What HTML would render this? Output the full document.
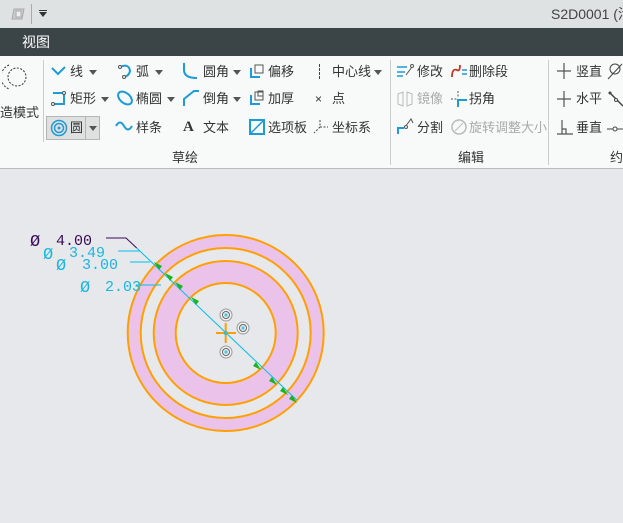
<!DOCTYPE html>
<html><head><meta charset="utf-8"><style>
*{margin:0;padding:0;box-sizing:border-box}
body{width:623px;height:523px;overflow:hidden;background:#e6e8eb;font-family:"Liberation Sans","Noto Sans CJK SC",sans-serif;position:relative}
.t{position:absolute;font-size:13px;color:#333;white-space:nowrap;line-height:16px}
.g{color:#aaa}
.ic{position:absolute}
.dd{position:absolute;width:0;height:0;border-left:4px solid transparent;border-right:4px solid transparent;border-top:5px solid #555}
</style></head><body>
<div style="position:absolute;left:0;top:0;width:623px;height:28px;background:#dee2e2"></div>
<div style="position:absolute;left:31px;top:4px;width:1px;height:20px;background:#aaa"></div>
<svg class="ic" style="left:10px;top:7px" width="16" height="14"><path d="M2 12 L4 2 L14 2 L12 12 Z" fill="#ccc" stroke="#aaa"/><rect x="6" y="4" width="5" height="6" fill="#eee" stroke="#aaa"/></svg>
<div class="dd" style="left:39px;top:12px;border-top-color:#333"></div><div style="position:absolute;left:39px;top:10px;width:8px;height:1px;background:#333"></div>
<div class="t" style="left:551px;top:6px;font-size:14px;color:#444">S2D0001 (活</div>
<div style="position:absolute;left:0;top:28px;width:623px;height:28px;background:#3b4446"></div>
<div class="t" style="left:22px;top:34px;color:#fff;font-size:14px">视图</div>
<div style="position:absolute;left:0;top:56px;width:623px;height:113px;background:#f8f9f9;border-bottom:1px solid #b8bcbe"></div>
<div style="position:absolute;left:43px;top:60px;width:1px;height:82px;background:#ccc"></div>
<div style="position:absolute;left:390px;top:60px;width:1px;height:105px;background:#ccc"></div>
<div style="position:absolute;left:548px;top:60px;width:1px;height:105px;background:#ccc"></div>
<svg class="ic" style="left:2px;top:62px" width="26" height="30"><path d="M7 3 A13 13 0 0 0 7 27" fill="none" stroke="#333" stroke-dasharray="2 1.5"/><circle cx="15" cy="15" r="9" fill="none" stroke="#333" stroke-dasharray="2 1.5"/></svg>
<div class="t" style="left:0;top:105px">造模式</div>
<svg class="ic" style="left:51px;top:64px" width="16" height="12"><path d="M1 4 L7 10 L14 3" fill="none" stroke="#1e9bd7" stroke-width="2"/></svg>
<div class="t" style="left:70px;top:64px">线</div><div class="dd" style="left:89px;top:70px"></div>
<svg class="ic" style="left:50px;top:90px" width="16" height="16"><path d="M3 3 H14 V14 H3" fill="none" stroke="#1e9bd7" stroke-width="2"/><circle cx="3" cy="14" r="1.5" fill="#fff" stroke="#555"/><circle cx="14" cy="3" r="1.5" fill="#fff" stroke="#555"/></svg>
<div class="t" style="left:70px;top:91px">矩形</div><div class="dd" style="left:101px;top:97px"></div>
<div style="position:absolute;left:46px;top:116px;width:54px;height:24px;background:#dfe0e0;border:1px solid #b5b5b5"></div>
<div style="position:absolute;left:85px;top:117px;width:1px;height:22px;background:#b5b5b5"></div>
<svg class="ic" style="left:50px;top:119px" width="18" height="18"><circle cx="9" cy="9" r="7.5" fill="none" stroke="#1e9bd7" stroke-width="1.5"/><circle cx="9" cy="9" r="4.5" fill="none" stroke="#1e9bd7" stroke-width="1.5"/><circle cx="9" cy="9" r="1.5" fill="#1e9bd7"/></svg>
<div class="t" style="left:70px;top:120px">圆</div><div class="dd" style="left:89px;top:126px"></div>
<svg class="ic" style="left:117px;top:63px" width="16" height="16"><path d="M3 4 Q12 0 13 8 Q12 13 7 14" fill="none" stroke="#1e9bd7" stroke-width="2"/><circle cx="3" cy="4" r="1.5" fill="#fff" stroke="#555"/><circle cx="7" cy="14" r="1.5" fill="#fff" stroke="#555"/></svg>
<div class="t" style="left:136px;top:64px">弧</div><div class="dd" style="left:155px;top:70px"></div>
<svg class="ic" style="left:116px;top:90px" width="18" height="16"><ellipse cx="9" cy="8" rx="8" ry="5" transform="rotate(40 9 8)" fill="none" stroke="#1e9bd7" stroke-width="2"/></svg>
<div class="t" style="left:136px;top:91px">椭圆</div><div class="dd" style="left:167px;top:97px"></div>
<svg class="ic" style="left:115px;top:119px" width="18" height="14"><path d="M1 7 Q5 0 9 7 Q13 14 17 7" fill="none" stroke="#1e9bd7" stroke-width="2"/></svg>
<div class="t" style="left:136px;top:120px">样条</div>
<svg class="ic" style="left:182px;top:62px" width="18" height="18"><path d="M2 1 V8 Q2 16 15 16" fill="none" stroke="#1e9bd7" stroke-width="2"/></svg>
<div class="t" style="left:203px;top:64px">圆角</div><div class="dd" style="left:233px;top:70px"></div>
<svg class="ic" style="left:182px;top:89px" width="18" height="18"><path d="M2 17 V10 L12 2 H17" fill="none" stroke="#1e9bd7" stroke-width="2"/></svg>
<div class="t" style="left:203px;top:91px">倒角</div><div class="dd" style="left:233px;top:97px"></div>
<div class="t" style="left:183px;top:119px;font-family:'Liberation Serif',serif;font-weight:bold;font-size:15px">A</div>
<div class="t" style="left:203px;top:120px">文本</div>
<svg class="ic" style="left:249px;top:63px" width="16" height="16"><path d="M2 5 V14 H11" fill="none" stroke="#1e9bd7" stroke-width="2"/><rect x="6" y="2" width="8" height="8" fill="none" stroke="#555"/></svg>
<div class="t" style="left:268px;top:64px">偏移</div>
<svg class="ic" style="left:249px;top:90px" width="16" height="16"><path d="M2 5 V14 H11" fill="none" stroke="#1e9bd7" stroke-width="2"/><rect x="6" y="2" width="8" height="8" fill="none" stroke="#555"/><rect x="9" y="1" width="5" height="5" fill="none" stroke="#555"/></svg>
<div class="t" style="left:268px;top:91px">加厚</div>
<svg class="ic" style="left:248px;top:118px" width="18" height="18"><rect x="2" y="2" width="14" height="14" fill="none" stroke="#1e9bd7" stroke-width="2"/><path d="M2 16 L16 2" stroke="#1e9bd7" stroke-width="1.5"/></svg>
<div class="t" style="left:268px;top:120px">选项板</div>
<div style="position:absolute;left:319px;top:64px;width:1px;height:15px;border-left:1px dashed #444"></div>
<div class="t" style="left:332px;top:64px">中心线</div><div class="dd" style="left:374px;top:70px"></div>
<div class="t" style="left:315px;top:91px;font-size:12px">×</div>
<div class="t" style="left:332px;top:91px">点</div>
<svg class="ic" style="left:312px;top:118px" width="18" height="18"><path d="M8 2 V9 H16 M8 9 L2 15" fill="none" stroke="#444" stroke-dasharray="2 1.5"/></svg>
<div class="t" style="left:332px;top:120px">坐标系</div>
<div class="t" style="left:172px;top:150px">草绘</div>
<svg class="ic" style="left:396px;top:63px" width="18" height="16"><path d="M1 4 H11 M1 9 H9 M1 13 H7" stroke="#1e9bd7" stroke-width="1.5"/><path d="M10 12 L16 4" stroke="#555"/><circle cx="16" cy="3" r="1.5" fill="#fff" stroke="#555"/></svg>
<div class="t" style="left:417px;top:64px">修改</div>
<svg class="ic" style="left:450px;top:62px" width="18" height="18"><path d="M2 15 Q2 6 7 8 Q10 10 10 3" fill="none" stroke="#c0392b" stroke-width="1.8"/><path d="M12 8 H17 M12 12 H17" stroke="#1e9bd7" stroke-width="1.5"/></svg>
<div class="t" style="left:469px;top:64px">删除段</div>
<svg class="ic" style="left:396px;top:90px" width="18" height="18"><path d="M2 4 L7 2 V16 L2 14Z M16 4 L11 2 V16 L16 14Z" fill="none" stroke="#bbb"/></svg>
<div class="t g" style="left:417px;top:91px">镜像</div>
<svg class="ic" style="left:450px;top:90px" width="18" height="18"><path d="M8 1 V8 M1 9 H7" stroke="#555" stroke-dasharray="2 1.5"/><path d="M8 17 V10 H17" fill="none" stroke="#1e9bd7" stroke-width="2"/></svg>
<div class="t" style="left:469px;top:91px">拐角</div>
<svg class="ic" style="left:396px;top:117px" width="18" height="18"><path d="M2 17 V11 H8" fill="none" stroke="#1e9bd7" stroke-width="2"/><path d="M9 10 L15 2 L17 6" fill="none" stroke="#555"/><circle cx="10" cy="10" r="1.5" fill="#fff" stroke="#555"/></svg>
<div class="t" style="left:417px;top:120px">分割</div>
<svg class="ic" style="left:450px;top:118px" width="18" height="18"><circle cx="9" cy="9" r="7" fill="none" stroke="#bbb" stroke-width="1.5"/><path d="M5 13 L13 5" stroke="#bbb"/></svg>
<div class="t g" style="left:469px;top:120px">旋转调整大小</div>
<div class="t" style="left:458px;top:150px">编辑</div>
<svg class="ic" style="left:556px;top:62px" width="16" height="18"><path d="M8 1 V17 M1 9 H15" stroke="#555" stroke-width="1.2"/></svg>
<div class="t" style="left:576px;top:64px">竖直</div>
<svg class="ic" style="left:556px;top:90px" width="16" height="18"><path d="M8 1 V17 M1 9 H15" stroke="#555" stroke-width="1.2"/></svg>
<div class="t" style="left:576px;top:91px">水平</div>
<svg class="ic" style="left:556px;top:118px" width="18" height="18"><path d="M6 2 V16 M1 16 H17 M6 11 H10 V16" fill="none" stroke="#555" stroke-width="1.2"/></svg>
<div class="t" style="left:576px;top:120px">垂直</div>
<svg class="ic" style="left:606px;top:62px" width="17" height="75"><circle cx="9" cy="7" r="5" fill="none" stroke="#444"/><path d="M2 17 L16 2" stroke="#444"/><path d="M3 30 L17 44" stroke="#444" stroke-width="1.5"/><circle cx="4" cy="31" r="1.5" fill="#444"/><circle cx="10" cy="38" r="1.5" fill="#fff" stroke="#444"/><path d="M1 67 H17" stroke="#444"/><circle cx="9" cy="67" r="2" fill="#fff" stroke="#444"/></svg>
<div class="t" style="left:610px;top:150px">约</div>
<svg class="ic" style="left:0;top:170px" width="623" height="353">
<g transform="translate(0,-170)">
<path fill-rule="evenodd" fill="#ebc3ea" d="M225.7 235 a98 98 0 1 0 0.01 0 Z M225.7 248 a85 85 0 1 1 -0.01 0 Z"/>
<path fill-rule="evenodd" fill="#ebc3ea" d="M225.7 261 a72 72 0 1 0 0.01 0 Z M225.7 283 a50 50 0 1 1 -0.01 0 Z"/>
<g fill="none" stroke="#ffa000" stroke-width="2">
<circle cx="225.7" cy="333" r="98"/><circle cx="225.7" cy="333" r="85"/><circle cx="225.7" cy="333" r="72"/><circle cx="225.7" cy="333" r="50"/>
</g>
<path d="M136.7 248 L296.7 400" stroke="#00bfe8" stroke-width="1"/>
<path d="M106 238 H126 L136.7 248" fill="none" stroke="#3b0a5a" stroke-width="1"/>
<path d="M118 251 H140 M130 262 H150 M136 285 H161" stroke="#00bfe8" stroke-width="1"/>
<g fill="#1cb41c">
<path d="M159 270 l-5 -8 l8 4z"/><path d="M170 281 l-5 -8 l8 4z"/><path d="M180 290 l-5 -8 l8 4z"/><path d="M196 305 l-5 -8 l8 4z"/>
<path d="M256 362 l5 8 l-8 -4z"/><path d="M272 377 l5 8 l-8 -4z"/><path d="M283 387 l5 8 l-8 -4z"/><path d="M292 395 l5 8 l-8 -4z"/>
</g>
<path d="M216 333 H236 M225.7 323 V343" stroke="#ffa000" stroke-width="2"/>
<circle cx="225.7" cy="333" r="2" fill="#3fb8c8"/>
<g><circle cx="226" cy="315" r="6" fill="#f2f2f2" stroke="#999"/><circle cx="226" cy="315" r="3.5" fill="none" stroke="#666"/><rect x="224.5" y="313.5" width="3" height="3" fill="#4cc3e0"/>
<circle cx="243" cy="328" r="6" fill="#f2f2f2" stroke="#999"/><circle cx="243" cy="328" r="3.5" fill="none" stroke="#666"/><rect x="241.5" y="326.5" width="3" height="3" fill="#4cc3e0"/>
<circle cx="226" cy="352" r="6" fill="#f2f2f2" stroke="#999"/><circle cx="226" cy="352" r="3.5" fill="none" stroke="#666"/><rect x="224.5" y="350.5" width="3" height="3" fill="#4cc3e0"/></g>
<g font-family="Liberation Mono, monospace" font-size="15">
<text x="30" y="246" fill="#3b0a5a" font-size="17">Ø</text><text x="56" y="245" fill="#3b0a5a">4.00</text>
<text x="43" y="259" fill="#1ab6e0" font-size="17">Ø</text><text x="69" y="257" fill="#1ab6e0">3.49</text>
<text x="56" y="270" fill="#1ab6e0" font-size="17">Ø</text><text x="82" y="269" fill="#1ab6e0">3.00</text>
<text x="80" y="292" fill="#1ab6e0" font-size="17">Ø</text><text x="105" y="291" fill="#1ab6e0">2.03</text>
</g>
</g></svg>
</body></html>
